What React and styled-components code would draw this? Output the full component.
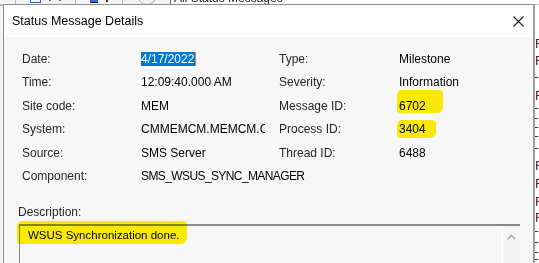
import React from 'react';
import styled, { createGlobalStyle } from 'styled-components';

const GlobalStyle = createGlobalStyle`
  html, body {
    margin: 0;
    padding: 0;
  }
  body {
    background: #fff;
    font-family: "Liberation Sans", Arial, sans-serif;
  }
  #root {
    width: 539px;
    height: 263px;
    overflow: hidden;
  }
`;

const fields = [
  ['Date:', '4/17/2022', 'Type:', 'Milestone'],
  ['Time:', '12:09:40.000 AM', 'Severity:', 'Information'],
  ['Site code:', 'MEM', 'Message ID:', '6702'],
  ['System:', 'CMMEMCM.MEMCM.COM', 'Process ID:', '3404'],
  ['Source:', 'SMS Server', 'Thread ID:', '6488'],
  ['Component:', 'SMS_WSUS_SYNC_MANAGER', '', ''],
];

// bits of the list behind the dialog that peek out on the right edge
const backRows = [
  ['F', 18.5], ['F', 16.5], ['-', 17.5], ['F', 17], ['-', 10.5], ['-', 9],
  ['-', 9.5], ['-', 8.5], ['-', 15], ['F', 19], ['F', 17.5], ['F', 17.5],
  ['F', 15.5], ['-', 12], ['-', 10], ['-', 9], ['-', 6.5],
];

const CloseIcon = () => (
  <svg width="11" height="11" viewBox="0 0 11 11">
    <path d="M0.5 0.5 L10.5 10.5 M10.5 0.5 L0.5 10.5" stroke="#1f1f1f" strokeWidth="1.1" fill="none" />
  </svg>
);

const Chevron = () => (
  <svg width="9" height="6" viewBox="0 0 9 6">
    <path d="M0.8 5.2 L4.5 1.4 L8.2 5.2" stroke="#a8a8a8" strokeWidth="1.6" fill="none" />
  </svg>
);

const markFor = {
  '6702': { $pad: '9px 17px 0 2px' },
  '3404': { $pad: '2px 10px 2px 2px' },
};

const App = () => {
  return (
    <>
      <GlobalStyle />
      <Screen>
        <TopStrip>
          <ToolbarBits>
            <Sep />
            <BlueBox />
            <Dot />
            <Dot />
            <Sep />
            <BlueBit />
            <DarkBit />
            <Sep />
            <RoundBit />
          </ToolbarBits>
          <FilterBox>
            <FilterText>All Status Messages</FilterText>
          </FilterBox>
        </TopStrip>

        <LeftGutter />

        <Dialog>
          <TitleBar>
            <Title>Status Message Details</Title>
            <CloseIcon />
          </TitleBar>

          <Body>
            <FieldGrid>
              {fields.map(([l1, v1, l2, v2]) => (
                <React.Fragment key={l1}>
                  <Label>{l1}</Label>
                  <Value $clip={l1 === 'System:'} $tight={l1 === 'Component:'}>
                    {l1 === 'Date:' ? <Selected>{v1}</Selected> : v1}
                  </Value>
                  <Label>{l2}</Label>
                  <Value>{markFor[v2] ? <Mark {...markFor[v2]}>{v2}</Mark> : v2}</Value>
                </React.Fragment>
              ))}
            </FieldGrid>

            <Description>
              <Label>Description:</Label>
              <TextBox>
                <TextArea>
                  <Mark $pad="8px 7px 3px 11px">WSUS Synchronization done.</Mark>
                </TextArea>
                <ScrollBar>
                  <ScrollButton>
                    <Chevron />
                  </ScrollButton>
                </ScrollBar>
              </TextBox>
            </Description>
          </Body>
        </Dialog>

        <BackList>
          {backRows.map(([kind, h], i) => (
            <BackRow key={i} $h={h} $first={i === 0}>
              {kind === 'F' ? <RedF>F</RedF> : <Dash />}
            </BackRow>
          ))}
        </BackList>
      </Screen>
    </>
  );
};

const Screen = styled.div`
  display: grid;
  grid-template-columns: 3px 1fr 4px;
  grid-template-rows: 4px 1fr;
  width: 539px;
  height: 263px;
  overflow: hidden;
  background: #fff;
`;

const TopStrip = styled.div`
  grid-column: 1 / -1;
  display: flex;
  height: 4px;
  overflow: hidden;
  background: #fff;
`;

const ToolbarBits = styled.div`
  display: flex;
  align-items: flex-start;
  gap: 8px;
  width: 170px;
  padding-left: 9px;
  box-sizing: border-box;
  background: #f4f4f4;
`;

const Sep = styled.span`
  width: 1px;
  height: 4px;
  background: #b8b8b8;
  margin: 0 6px;
`;

const BlueBox = styled.span`
  width: 9px;
  height: 2px;
  border: 1px solid #2c5fbf;
  border-top: none;
`;

const Dot = styled.span`
  width: 2px;
  height: 1px;
  background: #666;
`;

const BlueBit = styled.span`
  width: 8px;
  height: 2px;
  background: #2f6fd0;
  border-bottom: 1px solid #222;
`;

const DarkBit = styled.span`
  width: 2px;
  height: 2px;
  background: #333;
`;

const RoundBit = styled.span`
  width: 18px;
  height: 18px;
  margin-top: -15px;
  border: 1px solid #aaa;
  border-radius: 50%;
`;

const FilterBox = styled.div`
  flex: 1;
  border-left: 1px solid #6e6e6e;
  padding-left: 3px;
  background: #fff;
`;

const FilterText = styled.div`
  margin-top: -8px;
  font-size: 12px;
  line-height: 12px;
  color: #222;
`;

const LeftGutter = styled.div`
  background: #f3f3f3;
  border-top: 1px solid #c8c8c8;
  box-shadow: inset 0 29px 0 -28px #b0b0b0;
`;

const Dialog = styled.section`
  display: flex;
  flex-direction: column;
  min-height: 0;
  border: 1px solid #8c8c8c;
  border-right: 2px solid #9c9c9c;
  border-bottom: none;
  background: #f7f7f7;
  overflow: hidden;
`;

const TitleBar = styled.header`
  display: flex;
  align-items: center;
  justify-content: space-between;
  flex: none;
  height: 32px;
  padding: 0 9px 0 8px;
  background: #fff;
`;

const Title = styled.span`
  font-size: 12.5px;
  color: #000;
`;

const Body = styled.div`
  padding-top: 10.4px;
`;

const FieldGrid = styled.div`
  display: grid;
  grid-template-columns: 119px 138px 120px 1fr;
  grid-auto-rows: 23.4px;
  align-items: center;
  margin-left: 18px;
`;

const Label = styled.span`
  font-size: 12px;
  line-height: 14px;
  color: #262626;
  white-space: nowrap;
`;

const Value = styled.span`
  font-size: 12px;
  line-height: 14px;
  color: #000;
  white-space: nowrap;
  letter-spacing: ${({ $tight }) => ($tight ? '-0.6px' : 'normal')};
  overflow: ${({ $clip }) => ($clip ? 'hidden' : 'visible')};
  max-width: ${({ $clip }) => ($clip ? '124px' : 'none')};
`;

const Selected = styled.span`
  background: #0078d7;
  color: #fff;
  padding: 0 1px 0 0;
  border-right: 1px solid #f08a24;
`;

const Mark = styled.span`
  padding: ${({ $pad }) => $pad};
  margin: 0 -${({ $pad }) => $pad.split(' ')[1]} 0 -${({ $pad }) => $pad.split(' ')[3]};
  background: #fff200;
  border-radius: 5px 4px 6px 3px;
  mix-blend-mode: multiply;
`;

const Description = styled.div`
  display: flex;
  flex-direction: column;
  margin: 17.6px 0 0 14px;
`;

const TextBox = styled.div`
  display: flex;
  width: 500px;
  height: 60px;
  margin: 5px 0 0 1px;
  border-top: 2px solid #8a8a8a;
  border-left: 1px solid #8a8a8a;
  background: #f7f7f7;
`;

const TextArea = styled.div`
  flex: 1;
  padding: 2.5px 0 0 8px;
  font-size: 11.5px;
  line-height: 13px;
  color: #000;
`;

const ScrollBar = styled.div`
  width: 17px;
  border-left: 1px solid #fff;
  background: #f4f4f4;
`;

const ScrollButton = styled.div`
  display: flex;
  align-items: center;
  justify-content: center;
  height: 22px;
`;

const BackList = styled.div`
  display: flex;
  flex-direction: column;
  padding-top: 20px;
  background: #fff;
  box-shadow: inset 0 22px 0 -21px #c4c4c4;
`;

const BackRow = styled.div`
  display: flex;
  align-items: center;
  height: ${({ $h }) => $h}px;
  flex: none;
  margin-top: ${({ $first }) => ($first ? '10px' : '0')};
`;

const RedF = styled.span`
  font-size: 13px;
  line-height: 13px;
  color: #6b1232;
`;

const Dash = styled.span`
  width: 3px;
  height: 1px;
  background: #333;
`;

export default App;
